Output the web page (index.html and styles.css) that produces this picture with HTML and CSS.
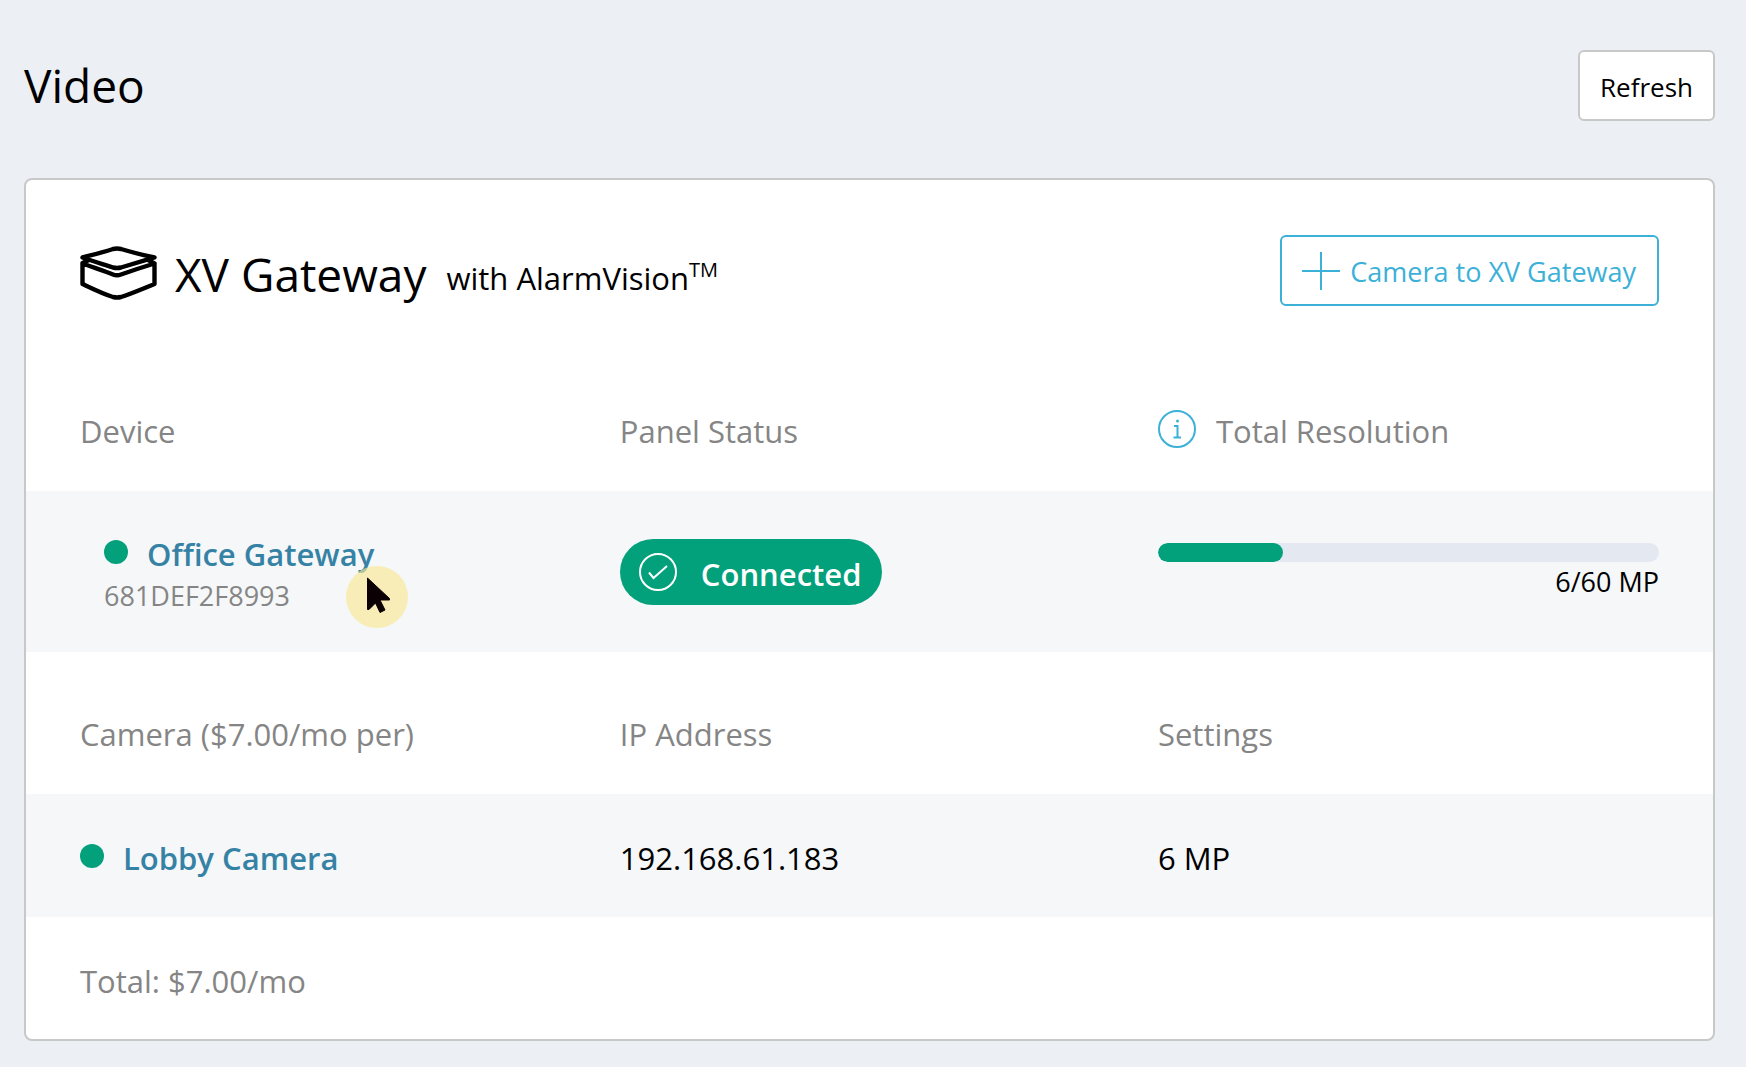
FILE: index.html
```html
<!DOCTYPE html>
<html lang="en">
<head>
<meta charset="utf-8">
<title>Video</title>
<link rel="stylesheet" href="styles.css">
</head>
<body>
<header class="page-head">
  <h1>Video</h1>
  <button class="btn btn-refresh" type="button">Refresh</button>
</header>
<main class="card">
  <div class="card-head">
    <svg class="gateway-icon" viewBox="0 0 77 54" fill="none" stroke="currentColor" stroke-width="4.400" stroke-linejoin="round" stroke-linecap="round" aria-hidden="true">
      <path d="M2.500 11.500C12 9 24 6 33 3Q37 2 41 3C51 6 63 9 74.500 11.500C63 15 51 18.500 41 21.500Q37 22.500 33 21.500C24 18.500 12 15 2.500 11.500Z"/>
      <path d="M2.500 17.500C12 21 24 25 33 28.500Q37 30 41 28.500C51 25 63 21 74.500 17.500V38C62 43 52 47.500 41 51Q37 52 33 51C22 47.500 13 43 2.500 38V17L8 14.500M74.500 17.500L69 14.500"/>
    </svg>
    <h2>XV Gateway</h2>
    <p class="subtitle">with AlarmVision<sup>TM</sup></p>
    <button class="btn btn-add" type="button">
      <svg width="38" height="38" viewBox="0 0 38 38" stroke="currentColor" stroke-width="2" aria-hidden="true"><path d="M0 19H38M19 0V38"/></svg>
      Camera to XV Gateway
    </button>
  </div>
  <table>
    <thead>
      <tr>
        <th scope="col">Device</th>
        <th scope="col">Panel Status</th>
        <th scope="col">
          <span class="with-info">
            <svg width="38" height="38" viewBox="0 0 38 38" fill="none" stroke="#3bb1d8" stroke-width="2" aria-hidden="true"><circle cx="19" cy="19" r="18"/><path d="M16 16H19.500V27.500M15.500 27.500H23"/><circle cx="19.500" cy="11" r="1.500" fill="#3bb1d8" stroke="none"/></svg>
            Total Resolution
          </span>
        </th>
      </tr>
    </thead>
    <tbody>
      <tr class="device-row">
        <td>
          <div class="device">
            <span class="name"><span class="dot"></span><a href="#office">Office Gateway</a></span>
            <span class="serial">681DEF2F8993</span>
            <svg class="pointer" viewBox="0 0 62 62" aria-hidden="true">
              <circle cx="31" cy="31" r="31" fill="#f9e892" fill-opacity=".65"/>
              <path d="M21.500 12L43.500 32.500V34H34L39 44L34 46.500L29.500 37L23 43.500H21.500Z" fill="#0b0003" stroke="#0b0003" stroke-linejoin="round"/>
            </svg>
          </div>
        </td>
        <td>
          <span class="status">
            <svg width="38" height="38" viewBox="0 0 38 38" fill="none" stroke="currentColor" stroke-width="2" aria-hidden="true"><circle cx="19" cy="19" r="18"/><path d="M10 19.500L14.500 25L28 13"/></svg>
            <span>Connected</span>
          </span>
        </td>
        <td>
          <div class="usage">
            <div class="bar"><div class="fill"></div></div>
            <span>6/60 MP</span>
          </div>
        </td>
      </tr>
    </tbody>
  </table>
  <table>
    <thead>
      <tr>
        <th scope="col">Camera ($7.00/mo per)</th>
        <th scope="col">IP Address</th>
        <th scope="col">Settings</th>
      </tr>
    </thead>
    <tbody>
      <tr class="camera-row">
        <td><span class="name"><span class="dot"></span><a href="#lobby">Lobby Camera</a></span></td>
        <td>192.168.61.183</td>
        <td>6 MP</td>
      </tr>
    </tbody>
  </table>
  <p class="total">Total: $7.00/mo</p>
</main>
</body>
</html>
```
FILE: styles.css
```css
* { box-sizing: border-box; }

body {
  margin: 0;
  padding: 50px 31px 24px 24px;
  background: #ecf0f5;
  color: #000;
  font: 31px/44px "Open Sans", "Noto Sans", sans-serif;
}

h1, h2, p { margin: 0; font-weight: 400; }
h1, h2 { font-size: 46px; line-height: 64px; }
svg { display: block; flex: none; }

.page-head {
  display: flex;
  justify-content: space-between;
  align-items: center;
  margin-bottom: 57px;
}
.page-head h1 { padding-bottom: 2px; }

.btn {
  display: flex;
  align-items: center;
  gap: 10px;
  height: 71px;
  padding: 2px 21px 0 20px;
  border: 2px solid #c8c8c8;
  border-radius: 6px;
  background: #fff;
  color: #000;
  font: inherit;
  font-size: 27px;
}
.btn-refresh { padding: 2px 20px 0; font-size: 26px; }
.btn-add {
  margin-left: auto;
  border-color: #3bb1d8;
  color: #3bb1d8;
}
.btn-add svg { margin-top: -2px; }

.card {
  border: 2px solid #c8c8c8;
  border-radius: 8px;
  background: #fff;
}
.card-head {
  display: flex;
  align-items: center;
  height: 169px;
  padding: 12px 54px 0;
}
.gateway-icon { width: 77px; height: 54px; margin: 4px 18px 0 0; }
.card-head h2 { padding-top: 6px; }
.subtitle { margin-left: 20px; padding-top: 14px; }
.subtitle sup { font-size: 20px; line-height: 0; vertical-align: 13px; }

table { width: 100%; border-collapse: collapse; table-layout: fixed; }
th, td { padding: 0; text-align: left; }
th:first-child, td:first-child { padding-left: 54px; }
th:first-child { width: 35.2%; }
th:nth-child(2) { width: 31.9%; }
th:last-child, td:last-child { padding-right: 54px; }
th {
  height: 142px;
  padding-bottom: 38px;
  vertical-align: bottom;
  color: #858585;
  font-weight: 400;
}
tbody tr { background: #f5f7f9; }
.device-row { height: 161px; }
.camera-row { height: 123px; }
.camera-row td { padding-top: 4px; }

.with-info { display: flex; align-items: center; gap: 20px; }
.with-info svg { margin-top: -4px; }

.name { display: flex; align-items: center; gap: 19px; }
.name a { color: #3682a5; font-weight: 600; text-decoration: none; }
.dot { width: 24px; height: 24px; margin-top: -4px; border-radius: 50%; background: #03a07c; }

.device {
  position: relative;
  display: flex;
  flex-direction: column;
  padding: 5px 0 0 24px;
}
.serial { color: #858585; font-size: 27px; line-height: 40px; }
.pointer { position: absolute; top: 39px; left: 266px; width: 62px; height: 62px; }

.status {
  display: inline-flex;
  align-items: center;
  gap: 24px;
  height: 66px;
  padding: 0 21px 0 19px;
  border-radius: 33px;
  background: #03a07c;
  color: #fff;
  font-weight: 600;
  vertical-align: middle;
}
.status span { padding-top: 4px; }

.usage { display: flex; flex-direction: column; padding-top: 2px; text-align: right; font-size: 27px; line-height: 40px; }
.bar { height: 19px; border-radius: 10px; background: #e4e9f1; overflow: hidden; }
.fill { width: 25%; height: 100%; border-radius: 10px; background: #03a07c; }

.total { padding: 42px 54px 36px; color: #858585; }
```
